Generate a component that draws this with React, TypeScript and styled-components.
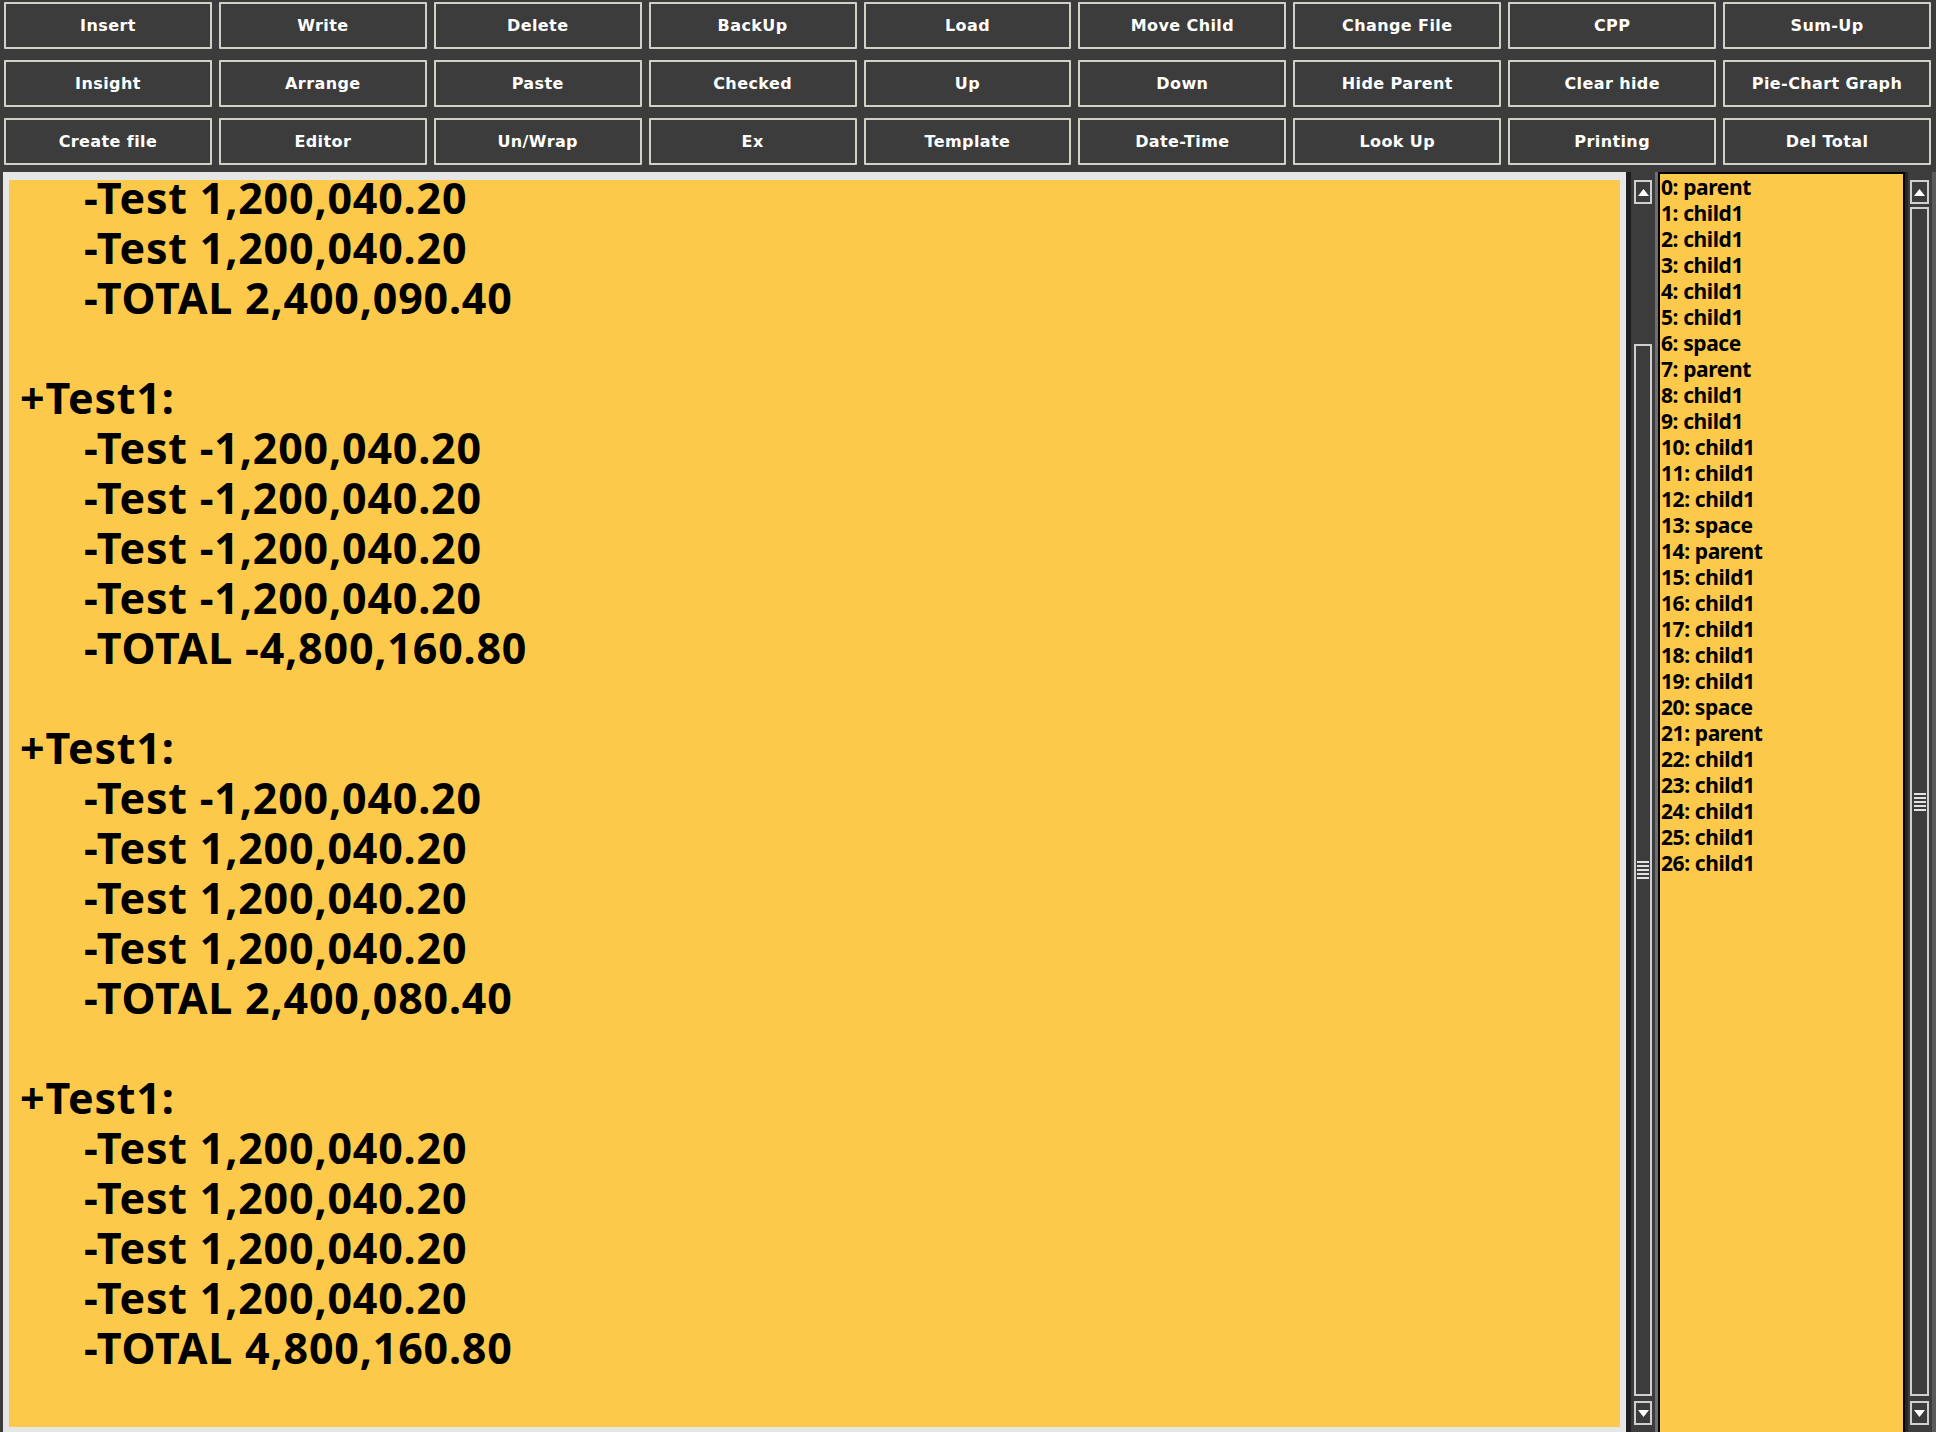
import React from "react";
import styled, { createGlobalStyle } from "styled-components";

const YELLOW = "#fcc94b";
const DARK = "#3c3c3c";
const EDGE = "#d3d0c8";

const Global = createGlobalStyle`
  html, body { margin: 0; padding: 0; background: ${DARK}; }
  body { width: 1936px; height: 1432px; overflow: hidden; }
  * { box-sizing: border-box; }
`;

const Page = styled.div`
  width: 1936px;
  height: 1432px;
  display: flex;
  flex-direction: column;
  background: ${DARK};
`;

const Toolbar = styled.div`
  display: grid;
  grid-template-columns: repeat(9, 1fr);
  grid-auto-rows: 47px;
  column-gap: 7px;
  row-gap: 11px;
  padding: 2px 5px 0 4px;
`;

const ToolButton = styled.button`
  height: 47px;
  margin: 0;
  padding: 0;
  background: ${DARK};
  border: 2px solid ${EDGE};
  border-radius: 1px;
  color: #ffffff;
  font-family: "DejaVu Sans", Verdana, sans-serif;
  font-weight: 700;
  font-size: 16px;
  letter-spacing: 0.4px;
  cursor: pointer;
`;

const Workspace = styled.div`
  flex: 1;
  min-height: 0;
  display: grid;
  grid-template-columns: 1623px 32px 247px 31px;
  margin-top: 7px;
  padding-left: 3px;
`;

const Editor = styled.div`
  background: ${YELLOW};
  border-style: solid;
  border-color: #e6e6e6;
  border-width: 8px 6px 5px 6px;
  overflow: hidden;
  font-family: "Noto Sans", "DejaVu Sans", sans-serif;
  font-weight: 700;
  font-size: 43px;
  letter-spacing: 0.8px;
  line-height: 50px;
  color: #000;
`;

const EditorContent = styled.div`
  margin-top: -7px;
  padding-left: 11px;
`;

const Group = styled.div`
  margin-bottom: 50px;
`;

const ParentLine = styled.div`
  white-space: pre;
`;

const ChildLine = styled.div`
  white-space: pre;
  padding-left: 64px;
`;

const Scrollbar = styled.div<{ $left?: boolean }>`
  display: flex;
  flex-direction: column;
  background: ${DARK};
  border-left: ${(p) => (p.$left ? "5px solid #1e1e1e" : "3px solid #262626")};
  border-right: ${(p) => (p.$left ? "3px solid #6f6f6f" : "4px solid #5a5a5a")};
  padding: 8px 3px 7px ${(p) => (p.$left ? "3px" : "2px")};
`;

const ArrowButton = styled.div`
  height: 24px;
  flex: none;
  border: 2px solid #cfcfcf;
  background: ${DARK};
  display: flex;
  align-items: center;
  justify-content: center;
`;

const Track = styled.div<{ $offset: number }>`
  flex: 1;
  min-height: 0;
  display: flex;
  flex-direction: column;
  padding-top: ${(p) => p.$offset}px;
  padding-bottom: 5px;
`;

const Thumb = styled.div`
  flex: 1;
  border: 2px solid #cfcfcf;
  background: ${DARK};
  display: flex;
  align-items: center;
  justify-content: center;
`;

const Grip = styled.div`
  width: 12px;
  height: 18px;
  background: repeating-linear-gradient(
    to bottom,
    #e2e2e2 0 2px,
    transparent 2px 4px
  );
`;

const ListPanel = styled.div`
  background: ${YELLOW};
  border: 2px solid #000;
  border-bottom: none;
  overflow: hidden;
  padding: 0 0 0 1px;
  font-family: "Noto Sans", "DejaVu Sans", sans-serif;
  font-weight: 700;
  font-size: 21px;
  letter-spacing: -0.4px;
  line-height: 26px;
  color: #000;
`;

const ListItem = styled.div`
  white-space: pre;
`;

const Arrow = ({ down }: { down?: boolean }) => (
  <svg width="11" height="7" viewBox="0 0 11 7">
    <polygon points={down ? "0,0 11,0 5.5,7" : "0,7 11,7 5.5,0"} fill="#ffffff" />
  </svg>
);

const ScrollBar = ({ left, offset }: { left?: boolean; offset: number }) => (
  <Scrollbar $left={left}>
    <ArrowButton>
      <Arrow />
    </ArrowButton>
    <Track $offset={offset}>
      <Thumb>
        <Grip />
      </Thumb>
    </Track>
    <ArrowButton>
      <Arrow down />
    </ArrowButton>
  </Scrollbar>
);

const buttons = [
  "Insert", "Write", "Delete", "BackUp", "Load", "Move Child", "Change File", "CPP", "Sum-Up",
  "Insight", "Arrange", "Paste", "Checked", "Up", "Down", "Hide Parent", "Clear hide", "Pie-Chart Graph",
  "Create file", "Editor", "Un/Wrap", "Ex", "Template", "Date-Time", "Look Up", "Printing", "Del Total",
];

const P = "-Test 1,200,040.20";
const N = "-Test -1,200,040.20";

const groups: { parent?: string; children: string[] }[] = [
  { children: [P, P, "-TOTAL 2,400,090.40"] },
  { parent: "+Test1:", children: [N, N, N, N, "-TOTAL -4,800,160.80"] },
  { parent: "+Test1:", children: [N, P, P, P, "-TOTAL 2,400,080.40"] },
  { parent: "+Test1:", children: [P, P, P, P, "-TOTAL 4,800,160.80"] },
];

const kinds = ["parent", "child1", "child1", "child1", "child1", "child1", "space"];
const listItems = Array.from({ length: 27 }, (_, i) => `${i}: ${kinds[i % 7]}`);

export default function App() {
  return (
    <Page>
      <Global />
      <Toolbar>
        {buttons.map((b) => (
          <ToolButton key={b}>{b}</ToolButton>
        ))}
      </Toolbar>
      <Workspace>
        <Editor>
          <EditorContent>
            {groups.map((g, i) => (
              <Group key={i}>
                {g.parent && <ParentLine>{g.parent}</ParentLine>}
                {g.children.map((c, j) => (
                  <ChildLine key={j}>{c}</ChildLine>
                ))}
              </Group>
            ))}
          </EditorContent>
        </Editor>
        <ScrollBar left offset={140} />
        <ListPanel>
          {listItems.map((t) => (
            <ListItem key={t}>{t}</ListItem>
          ))}
        </ListPanel>
        <ScrollBar offset={3} />
      </Workspace>
    </Page>
  );
}
